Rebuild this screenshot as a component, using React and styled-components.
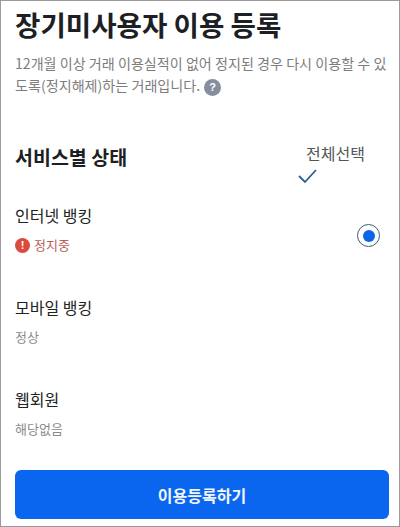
import React from "react";
import styled, { createGlobalStyle } from "styled-components";

const GlobalStyle = createGlobalStyle`
  html, body {
    margin: 0;
    padding: 0;
    background: #fff;
  }
  * {
    box-sizing: border-box;
  }
`;

const services = [
  { name: "인터넷 뱅킹", status: "정지중", stopped: true },
  { name: "모바일 뱅킹", status: "정상" },
  { name: "웹회원", status: "해당없음" },
];

export default function App() {
  return (
    <Page>
      <GlobalStyle />
      <Title>장기미사용자 이용 등록</Title>
      <Desc>
        12개월 이상 거래 이용실적이 없어 정지된 경우 다시 이용할 수 있도록(정지해제)하는 거래입니다.
        <HelpIcon>?</HelpIcon>
      </Desc>
      <SectionHead>
        <SectionTitle>서비스별 상태</SectionTitle>
        <SelectAll>
          <span>전체선택</span>
          <svg width="22" height="16" viewBox="0 0 22 16" fill="none">
            <path d="M2 8l6 6L19 2" stroke="#2a5f94" strokeWidth="1.8" />
          </svg>
        </SelectAll>
      </SectionHead>
      <List>
        {services.map((s) => (
          <Row key={s.name}>
            <div>
              <Name>{s.name}</Name>
              <Status $stopped={s.stopped}>
                {s.stopped && <AlertIcon>!</AlertIcon>}
                {s.status}
              </Status>
            </div>
            {s.stopped && (
              <Radio>
                <RadioDot />
              </Radio>
            )}
          </Row>
        ))}
      </List>
      <Submit>이용등록하기</Submit>
    </Page>
  );
}

const Page = styled.div`
  width: 400px;
  height: 527px;
  padding: 6px 10px 7px 14px;
  border: 1px solid #9a9a9a;
  overflow: hidden;
  display: flex;
  flex-direction: column;
  color: #222;
  font-family: "Noto Sans CJK KR", "Noto Sans", sans-serif;
`;

const Title = styled.h1`
  margin: 0;
  font-size: 27.6px;
  line-height: 34px;
  font-weight: 700;
  color: #1d1f24;
`;

const Desc = styled.p`
  margin: 11px 0 0;
  font-size: 14.1px;
  line-height: 22px;
  color: #7d7d7d;
  width: 376px;
`;

const HelpIcon = styled.span`
  display: inline-flex;
  align-items: center;
  justify-content: center;
  width: 17px;
  height: 17px;
  margin-left: 4px;
  border-radius: 50%;
  background: #868e9e;
  color: #fff;
  font-size: 11px;
  line-height: 17px;
  font-weight: 700;
  vertical-align: 0;
  font-family: "Liberation Sans", sans-serif;
`;

const SectionHead = styled.div`
  display: flex;
  justify-content: space-between;
  margin-top: 38px;
`;

const SectionTitle = styled.h2`
  margin: 9px 0 0;
  font-size: 19.5px;
  line-height: 28px;
  font-weight: 700;
  color: #1d1f24;
`;

const SelectAll = styled.div`
  width: 83px;
  margin-top: 8px;
  font-size: 16px;
  line-height: 22px;
  color: #555;
  svg {
    display: block;
    margin: 4px 0 0 -9px;
  }
`;

const List = styled.div`
  display: flex;
  flex-direction: column;
  gap: 41px;
  margin-top: 19px;
`;

const Row = styled.div`
  display: flex;
  align-items: center;
  justify-content: space-between;
  padding-right: 9px;
`;

const Name = styled.div`
  font-size: 16px;
  line-height: 24px;
  color: #222;
`;

const Status = styled.div`
  display: flex;
  align-items: center;
  gap: 4px;
  margin-top: 9px;
  font-size: 13px;
  line-height: 18px;
  color: ${(p) => (p.$stopped ? "#b5615a" : "#8a8a8a")};
`;

const AlertIcon = styled.span`
  display: inline-flex;
  align-items: center;
  justify-content: center;
  width: 15px;
  height: 15px;
  border-radius: 50%;
  background: #dc4a3d;
  color: #fff;
  font-size: 11px;
  font-weight: 700;
  font-family: "Liberation Sans", sans-serif;
`;

const Radio = styled.div`
  width: 23px;
  height: 23px;
  margin-top: 14px;
  border-radius: 50%;
  border: 1px solid #3a5a80;
  display: flex;
  align-items: center;
  justify-content: center;
`;

const RadioDot = styled.div`
  width: 12px;
  height: 12px;
  border-radius: 50%;
  background: #0a66e8;
`;

const Submit = styled.button`
  margin: auto 0 0;
  height: 49px;
  width: 374px;
  flex-shrink: 0;
  border: none;
  border-radius: 6px;
  background: #0a66ee;
  color: #f2f6fc;
  font-family: inherit;
  font-size: 16px;
  font-weight: 700;
`;
